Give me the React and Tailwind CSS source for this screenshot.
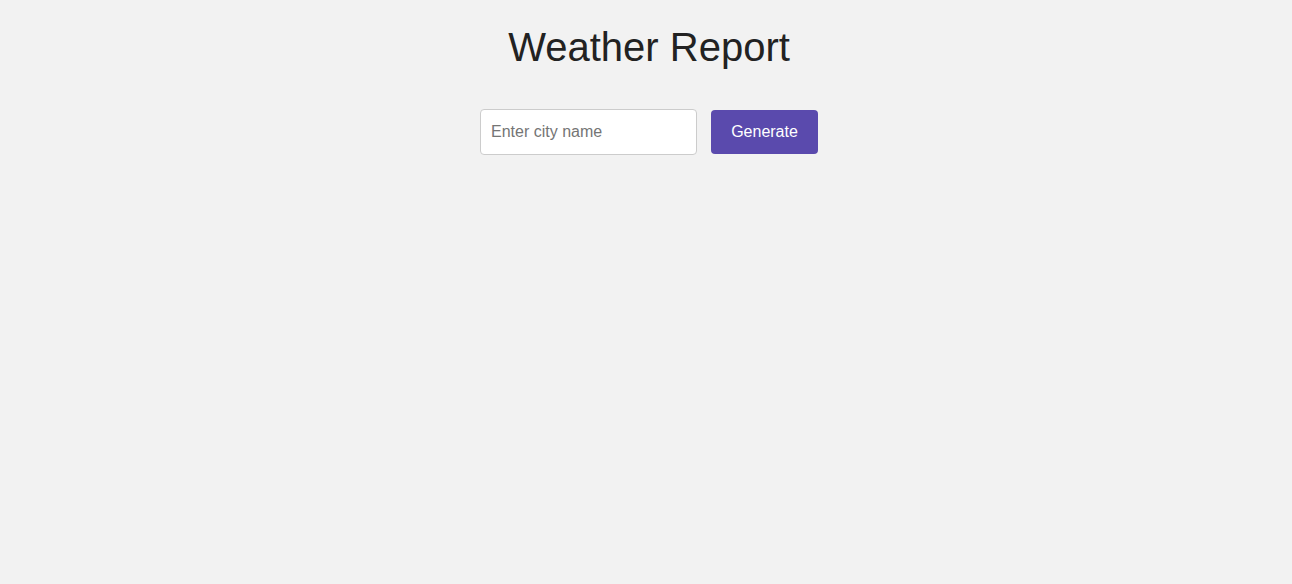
export default function App() {
  return (
    <div
      className="min-h-screen bg-[#f2f2f2] pt-[24px] pl-[6px] text-[#222]"
      style={{ fontFamily: '"Liberation Sans", Arial, sans-serif' }}
    >
      <h1 className="text-center text-[40px] leading-[46px] font-normal text-[#222]">Weather Report</h1>
      <form
        className="mt-[39px] flex items-center justify-center gap-[14px]"
        onSubmit={(e) => e.preventDefault()}
      >
        <input
          type="text"
          placeholder="Enter city name"
          className="h-[46px] w-[217px] rounded-[4px] border border-[#ccc] bg-white px-[10px] text-[16px] text-[#222] placeholder:text-[#757575] outline-none"
        />
        <button
          type="submit"
          className="h-[44px] w-[107px] rounded-[4px] bg-[#5a4aad] text-[16px] text-white"
        >
          Generate
        </button>
      </form>
    </div>
  );
}
